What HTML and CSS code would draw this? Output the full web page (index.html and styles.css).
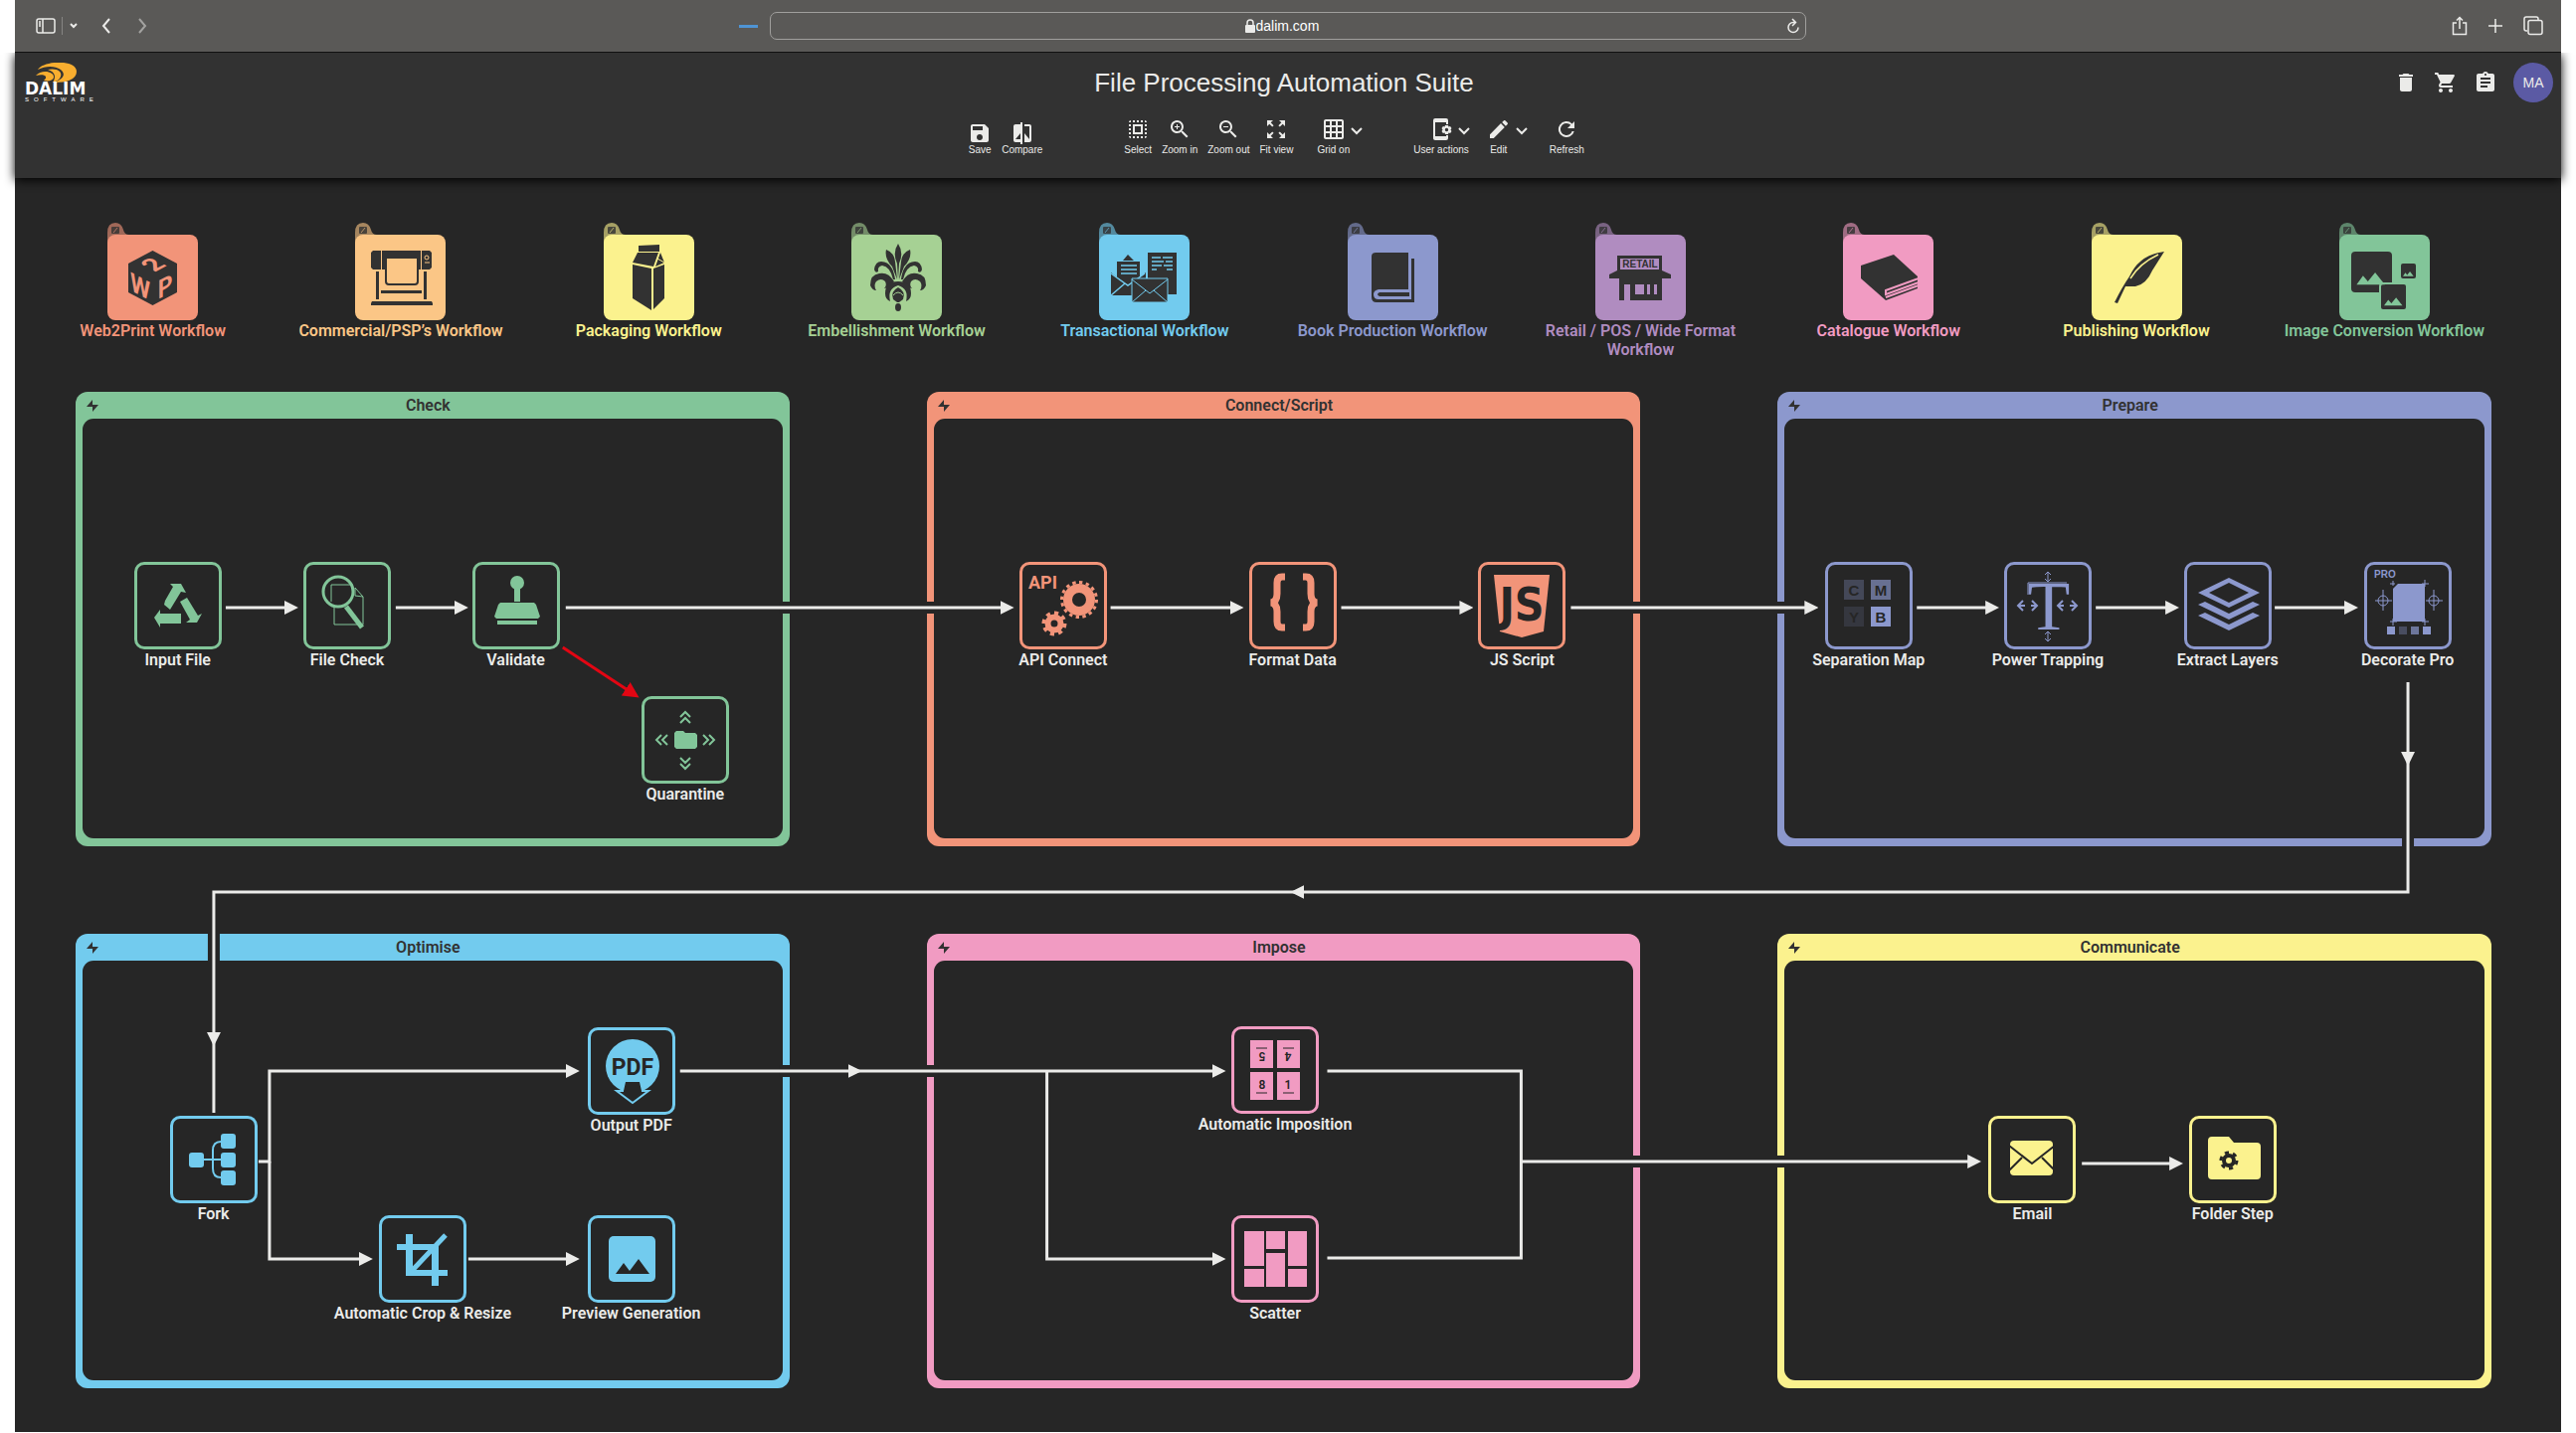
FILE: index.html
```html
<!DOCTYPE html>
<html lang="en">
<head>
  <meta charset="UTF-8" />
  <meta name="viewport" content="width=device-width, initial-scale=1.0"/>
  <title>File Processing Automation Suite</title>
  <link rel="stylesheet" href="styles.css">
</head>
<body>
  <div class="window">

    <!-- Browser bar -->
    <div class="browser">
      <div class="browser-left">
        <button class="bb" aria-label="Sidebar"><svg width="20" height="16" viewBox="0 0 20 16"><rect x="1" y="1" width="18" height="14" rx="2" class="line"/><path d="M7 1v14M3 4h2M3 6h2M3 8h2" class="line"/></svg></button>
        <span class="divider"></span>
        <button class="bb chev" aria-label="Tab groups"><svg width="8" height="6" viewBox="0 0 8 6"><path d="M1 1l3 3 3-3" class="line thick"/></svg></button>
        <button class="bb back" aria-label="Back"><svg width="10" height="16" viewBox="0 0 10 16"><path d="M8 1L2 8l6 7" class="line thick"/></svg></button>
        <button class="bb forward" aria-label="Forward"><svg width="10" height="16" viewBox="0 0 10 16"><path d="M2 1l6 7-6 7" class="line thick"/></svg></button>
        <span class="progress"></span>
      </div>
      <div class="address">
        <svg width="10" height="14" viewBox="0 0 10 14"><rect y="6" width="10" height="8" rx="1" fill="currentColor"/><path d="M2 6V4a3 3 0 0 1 6 0v2" class="line"/></svg>
        <input type="text" value="dalim.com" aria-label="Address">
        <button class="bb reload" aria-label="Reload"><svg width="14" height="16" viewBox="0 0 14 16"><path d="M9 4.500H7a5 5 0 1 0 5 5M6 1l3.500 3.500L6 8" class="line"/></svg></button>
      </div>
      <div class="browser-right">
        <button class="bb" aria-label="Share"><svg width="16" height="20" viewBox="0 0 16 20"><path d="M5 7H1.500v11.500h13V7H11M8 13V1.500M5 4.500l3-3 3 3" class="line"/></svg></button>
        <button class="bb" aria-label="New tab"><svg width="16" height="16" viewBox="0 0 16 16"><path d="M8 1v14M1 8h14" class="line"/></svg></button>
        <button class="bb" aria-label="Tabs"><svg width="20" height="20" viewBox="0 0 20 20"><path d="M4 15H3a2 2 0 0 1-2-2V3a2 2 0 0 1 2-2h10a2 2 0 0 1 2 2v1" class="line"/><rect x="5" y="4.500" width="14" height="14" rx="2" class="line"/></svg></button>
      </div>
    </div>

    <!-- Application header -->
    <header class="header">
      <a class="logo" href="#" aria-label="Dalim Software">
        <svg width="88" height="48" viewBox="0 0 88 48">
          <path class="swoosh" d="M13 7C18-2 52-4 52 9 52 17 42 20 29 20 38 17 42 12 36 7 30 3 21 3 13 7z"/>
          <path class="swoosh" d="M23 7C32 5 38 9 36 14 35 17 32 19 28 20 32 14 30 9 23 7z"/>
          <path class="swoosh" d="M11 13C17 6 30 9 29 15 28 18 24 19 19 18 24 14 20 11 11 13z"/>
          <text x="0" y="32" class="brand">DALIM</text>
          <text x="0" y="39" class="brand-sub">SOFTWARE</text>
        </svg>
      </a>
      <h1>File Processing Automation Suite</h1>
      <div class="account">
        <button class="icon-btn" aria-label="Delete"><svg width="24" height="24" viewBox="0 0 24 24"><path d="M6 19c0 1.100.9 2 2 2h8c1.100 0 2-.9 2-2V7H6v12zM19 4h-3.500l-1-1h-5l-1 1H5v2h14V4z"/></svg></button>
        <button class="icon-btn" aria-label="Cart"><svg width="24" height="24" viewBox="0 0 24 24"><path d="M7 18c-1.100 0-2 .9-2 2s.9 2 2 2 2-.9 2-2-.9-2-2-2zM1 2v2h2l3.600 7.600L5.200 14c-.1.300-.2.600-.2 1 0 1.100.9 2 2 2h12v-2H7.400c-.1 0-.2-.1-.2-.3L8.100 13h7.400c.8 0 1.400-.4 1.700-1l3.600-6.500C21.200 4.800 20.700 4 20 4H5.200l-.9-2H1zm16 16c-1.100 0-2 .9-2 2s.9 2 2 2 2-.9 2-2-.9-2-2-2z"/></svg></button>
        <button class="icon-btn" aria-label="Tasks"><svg width="24" height="24" viewBox="0 0 24 24"><path d="M19 3h-4.200C14.400 1.800 13.300 1 12 1s-2.400.8-2.800 2H5c-1.100 0-2 .9-2 2v14c0 1.100.9 2 2 2h14c1.100 0 2-.9 2-2V5c0-1.100-.9-2-2-2zm-7 0c.6 0 1 .4 1 1s-.4 1-1 1-1-.4-1-1 .4-1 1-1zm2 14H7v-2h7v2zm3-4H7v-2h10v2zm0-4H7V7h10v2z"/></svg></button>
        <button class="avatar">MA</button>
      </div>

      <div class="toolbar">
        <div class="tools low">
          <button class="tool"><svg width="24" height="24" viewBox="0 0 24 24"><path d="M17 3H5c-1.100 0-2 .9-2 2v14c0 1.100.9 2 2 2h14c1.100 0 2-.9 2-2V7l-4-4zm-5 16c-1.700 0-3-1.300-3-3s1.300-3 3-3 3 1.300 3 3-1.300 3-3 3zm3-10H5V5h10v4z"/></svg>Save</button>
          <button class="tool"><svg width="24" height="24" viewBox="0 0 24 24"><path d="M10 3H5c-1.100 0-2 .9-2 2v14c0 1.100.9 2 2 2h5v2h2V1h-2v2zm0 15H5l5-6v6zm9-15h-5v2h5v13l-5-6v9h5c1.100 0 2-.9 2-2V5c0-1.100-.9-2-2-2z"/></svg>Compare</button>
        </div>
        <div class="tools">
          <button class="tool"><svg width="24" height="24" viewBox="0 0 24 24"><path d="M3 5h2V3c-1.100 0-2 .9-2 2zm0 8h2v-2H3v2zm4 8h2v-2H7v2zM3 9h2V7H3v2zm10-6h-2v2h2V3zm6 0v2h2c0-1.100-.9-2-2-2zM5 21v-2H3c0 1.100.9 2 2 2zm-2-4h2v-2H3v2zM9 3H7v2h2V3zm2 18h2v-2h-2v2zm8-8h2v-2h-2v2zm0 8c1.100 0 2-.9 2-2h-2v2zm0-12h2V7h-2v2zm0 8h2v-2h-2v2zm-4 4h2v-2h-2v2zm0-16h2V3h-2v2zM7 17h10V7H7v10zm2-8h6v6H9V9z"/></svg>Select</button>
          <button class="tool"><svg width="24" height="24" viewBox="0 0 24 24"><path d="M15.500 14h-.8l-.3-.3A6.500 6.500 0 1 0 13.700 14.400l.3.3v.8l5 5 1.500-1.500-5-5zm-6 0a4.500 4.500 0 1 1 0-9 4.500 4.500 0 0 1 0 9zm2.500-4h-2v2H9v-2H7V9h2V7h1v2h2v1z"/></svg>Zoom in</button>
          <button class="tool"><svg width="24" height="24" viewBox="0 0 24 24"><path d="M15.500 14h-.8l-.3-.3A6.500 6.500 0 1 0 13.700 14.400l.3.3v.8l5 5 1.500-1.500-5-5zm-6 0a4.500 4.500 0 1 1 0-9 4.500 4.500 0 0 1 0 9zM7 9h5v1H7z"/></svg>Zoom out</button>
          <button class="tool"><svg width="24" height="24" viewBox="0 0 24 24"><path d="M15 3l2.300 2.300-2.900 2.900 1.400 1.400 2.900-2.900L21 9V3h-6zM3 9l2.300-2.300 2.900 2.900 1.400-1.400-2.900-2.900L9 3H3v6zm6 12l-2.300-2.300 2.900-2.900-1.400-1.400-2.900 2.900L3 15v6h6zm12-6l-2.300 2.300-2.900-2.900-1.400 1.400 2.900 2.900L15 21h6v-6z"/></svg>Fit view</button>
          <button class="tool grid-tool"><svg width="24" height="24" viewBox="0 0 24 24"><path d="M20 2H4c-1.100 0-2 .9-2 2v16c0 1.100.9 2 2 2h16c1.100 0 2-.9 2-2V4c0-1.100-.9-2-2-2zM8 20H4v-4h4v4zm0-6H4v-4h4v4zm0-6H4V4h4v4zm6 12h-4v-4h4v4zm0-6h-4v-4h4v4zm0-6h-4V4h4v4zm6 12h-4v-4h4v4zm0-6h-4v-4h4v4zm0-6h-4V4h4v4z"/></svg>Grid on<svg class="arrow" width="14" height="10" viewBox="0 0 14 10"><path d="M2 2l5 5 5-5" class="line thick"/></svg></button>
        </div>
        <div class="tools wide">
          <button class="tool"><svg width="24" height="24" viewBox="0 0 24 24"><path d="M17 1H6a2 2 0 0 0-2 2v18c0 1.100.9 2 2 2h11a2 2 0 0 0 2-2v-3h-2v1H6V5h11v2h2V3a2 2 0 0 0-2-2z"/><path fill-rule="evenodd" d="M16 8h3l.5 1.500 1.600-.4L22.500 11l-1 1.500 1 1.500-1.400 1.900-1.600-.4L19 17h-3l-.5-1.500-1.600.4L12.500 14l1-1.500-1-1.500 1.400-1.900 1.600.4zM17.500 10.800a1.700 1.700 0 1 0 0 3.400 1.700 1.700 0 0 0 0-3.400z"/></svg>User actions<svg class="arrow" width="14" height="10" viewBox="0 0 14 10"><path d="M2 2l5 5 5-5" class="line thick"/></svg></button>
          <button class="tool"><svg width="24" height="24" viewBox="0 0 24 24"><path d="M3 17.200V21h3.800L17.800 9.900l-3.800-3.800L3 17.200zM20.700 7c.4-.4.4-1 0-1.400l-2.300-2.300c-.4-.4-1-.4-1.400 0l-1.800 1.800 3.700 3.700L20.700 7z"/></svg>Edit<svg class="arrow" width="14" height="10" viewBox="0 0 14 10"><path d="M2 2l5 5 5-5" class="line thick"/></svg></button>
          <button class="tool refresh"><svg width="24" height="24" viewBox="0 0 24 24"><path d="M17.600 6.400A8 8 0 1 0 19.700 14h-2.100A6 6 0 1 1 12 6c1.700 0 3.100.7 4.200 1.800L13 11h7V4l-2.400 2.400z"/></svg>Refresh</button>
        </div>
      </div>
    </header>

    <!-- Shared shapes -->
    <svg class="defs" width="0" height="0" aria-hidden="true">
      <symbol id="tile" viewBox="0 -12 91 98">
        <path opacity=".6" d="M0 14V-2Q0-12 8-12 14-12 16-5 17 0 22 0L12 10z"/>
        <rect x="4" y="-8" width="8" height="7" rx="1" class="ink" opacity=".8"/><path d="M6-2l4-5" stroke="currentColor" opacity=".6"/>
        <rect width="91" height="86" rx="8"/>
      </symbol>
      <symbol id="bolt" viewBox="0 0 12 12"><path d="M6 0v5h6L6 12V7H0z"/></symbol>
      <symbol id="mountains" viewBox="0 0 36 16"><path d="M0 15L8 4l6 7L23 0l12 15z"/></symbol>
    </svg>

    <!-- Workflow shortcuts -->
    <nav class="workflows">
      <a class="workflow orange" href="#">
        <svg viewBox="0 -12 91 98"><use href="#tile" y="-12" width="91" height="98"/>
          <path class="ink" d="M45.500 16L70 29v29L45.500 71 21 58V29z"/>
          <g class="cube"><text y="9" transform="matrix(.88 .47 0 1 33 52)">W</text><text y="9" transform="matrix(.88 -.47 0 1 58 52)">P</text><text y="9" transform="matrix(.88 -.47 .88 .47 46 30)">2</text></g>
        </svg>
        <span>Web2Print Workflow</span>
      </a>
      <a class="workflow amber" href="#">
        <svg viewBox="0 -12 91 98"><use href="#tile" y="-12" width="91" height="98"/>
          <g class="ink"><path d="M18 16h8v19h-8l-2-2V18zM27 16h39v19h-3V24H30v11h-3zM67 16h8l2 2v15l-2 2h-8zM21 37h3v28h-3zM69 37h3v28h-3zM26 56h41v3H26zM17 67h60l1 2v2H16v-2z"/></g>
          <path class="ink-line" d="M31 24v23q0 3 3 3h26q3 0 3-3V24"/><circle cx="72" cy="23" r="2" fill="none" stroke="currentColor"/><path d="M70 28h5" stroke="currentColor"/>
        </svg>
        <span>Commercial/PSP’s Workflow</span>
      </a>
      <a class="workflow yellow" href="#">
        <svg viewBox="0 -12 91 98"><use href="#tile" y="-12" width="91" height="98"/>
          <path class="ink" d="M35 11l21-1v7H35zM34 18h21l-5 14-21-4zM57 18l4 10-9 4zM29 30l19 4v42L29 64zM50 34l11-4v34L50 75z"/><path d="M54 24l7 4" stroke="currentColor"/>
        </svg>
        <span>Packaging Workflow</span>
      </a>
      <a class="workflow lime" href="#">
        <svg viewBox="0 -12 91 98"><use href="#tile" y="-12" width="91" height="98"/>
          <g class="ink">
            <path d="M47 9q6 9 1 20l-1 16-1-16q-5-11 1-20zM35 15q8 3 9 12l2 18-5-13q-8-8-6-17zM59 15q-8 3-9 12l-2 18 5-13q8-8 6-17z"/>
            <path d="M44 45C43 36 39 27 30 27q-6 0-7 8 1 4 4 2-1-5 4-6 8 1 11 14zM50 45C51 36 55 27 64 27q6 0 7 8-1 4-4 2 1-5-4-6-8 1-11 14z"/>
            <path d="M43 47Q37 37 28 39 19 40 19 51q2 5 6 5-3-5 0-9 5-4 9 0 2 4-1 7 4 0 10-7zM51 47Q57 37 66 39 75 40 75 51q-2 5-6 5 3-5 0-9-5-4-9 0-2 4 1 7-4 0-10-7z"/>
            <path d="M47 47q-13 0-13 12 0 6 5 8-3-13 8-16 11 3 8 16 5-2 5-8 0-12-13-12z"/><path d="M47 53q-8 4-5 12l4 3h2l4-3q3-8-5-12z"/><ellipse cx="47" cy="73" rx="3" ry="4"/>
          </g>
          <path d="M42 61q5-6 10 0" fill="none" stroke="currentColor"/>
        </svg>
        <span>Embellishment Workflow</span>
      </a>
      <a class="workflow cyan" href="#">
        <svg viewBox="0 -12 91 98"><use href="#tile" y="-12" width="91" height="98"/>
          <path class="ink" d="M49 18h29v42H49zM29 20l6 6H24zM18 27h23v16l6-5v23H12V38l6 5z"/>
          <path stroke="currentColor" stroke-width="1.500" fill="none" d="M53 23h9M64 23h10M53 27h12M67 27h7M53 31h10M65 31h9M53 35h5M68 35h6M22 31h16M22 35h16M22 39h16M12 39l17 12 17-12M12 61l14-12"/>
          <path class="ink" stroke="currentColor" d="M33 44h36v24H33z"/><path stroke="currentColor" fill="none" d="M33 45l18 14 18-14M33 68l14-12M69 68L55 56"/>
        </svg>
        <span>Transactional Workflow</span>
      </a>
      <a class="workflow indigo" href="#">
        <svg viewBox="0 -12 91 98"><use href="#tile" y="-12" width="91" height="98"/>
          <path class="ink" d="M28 18h33v37H31q-5 1-5 5 0 5 5 5h33V24h3v44H29q-5 0-5-5V22q0-4 4-4z"/><path class="ink" d="M32 58h30v4H32q-4-2 0-4z"/>
        </svg>
        <span>Book Production Workflow</span>
      </a>
      <a class="workflow purple" href="#">
        <svg viewBox="0 -12 91 98"><use href="#tile" y="-12" width="91" height="98"/>
          <path class="ink" fill-rule="evenodd" d="M22 21h45v15l9 4v4h-9v22H35V50h-6v16h-5V44H14v-4l8-4zM25 24v11h39V24zM40 50v10h9V50zM52 50v10h3V50zM59 50v10h3V50z"/><text x="45" y="33" class="retail">RETAIL</text>
        </svg>
        <span>Retail / POS / Wide Format Workflow</span>
      </a>
      <a class="workflow pink" href="#">
        <svg viewBox="0 -12 91 98"><use href="#tile" y="-12" width="91" height="98"/>
          <path class="ink" d="M18 31l33-11 24 22v12L43 66 18 44z"/><path stroke="currentColor" stroke-width="2" fill="none" d="M76 44L43 56v4l33-12M76 51L43 63"/>
        </svg>
        <span>Catalogue Workflow</span>
      </a>
      <a class="workflow yellow" href="#">
        <svg viewBox="0 -12 91 98"><use href="#tile" y="-12" width="91" height="98"/>
          <path class="ink" d="M73 17Q48 20 38 42 31 52 23 68l3 1 8-17h10Q55 50 61 36z"/><path stroke="currentColor" stroke-width="1.500" fill="none" d="M67 20Q48 29 39 44"/>
        </svg>
        <span>Publishing Workflow</span>
      </a>
      <a class="workflow green" href="#">
        <svg viewBox="0 -12 91 98"><use href="#tile" y="-12" width="91" height="98"/>
          <g class="ink"><rect x="12" y="17" width="41" height="41" rx="4"/><rect x="62" y="29" width="15" height="15" rx="2"/><rect x="41" y="49" width="27" height="27" rx="3" stroke="currentColor" stroke-width="2"/></g>
          <use href="#mountains" x="17" y="38" width="30" height="13"/><use href="#mountains" x="64" y="37" width="11" height="5"/><use href="#mountains" x="45" y="63" width="19" height="9"/>
        </svg>
        <span>Image Conversion Workflow</span>
      </a>
    </nav>

    <!-- Process diagram -->
    <main class="diagram">
      <section class="group green">
        <h2><svg class="bolt"><use href="#bolt"/></svg>Check</h2>
        <div class="panel">
          <div class="node input-file">
            <svg class="box" viewBox="3 3 82 82"><path d="M36 22h11l5 9-5-1-11 18-6-5 1-4 8-14zM46 40l7-4 11 18 4-2-5 9H52l4-3zM20 56l6-8v4h21v10H26v4z"/></svg>
            <span>Input File</span>
          </div>
          <div class="node file-check">
            <svg class="box" viewBox="3 3 82 82"><path class="stroke thin" d="M31 44v19h29V35l-8-9v8l8 1M28 40V23h22"/><circle class="stroke" cx="35" cy="30" r="15"/><path class="stroke fat" d="M43 45l16 21"/></svg>
            <span>File Check</span>
          </div>
          <div class="node validate">
            <svg class="box" viewBox="3 3 82 82"><circle cx="45" cy="21" r="7"/><path d="M42 27h6v13h-6zM28 41h34l2 2 4 12-2 2H24l-2-2 4-12zM25 59h40v4H25z"/></svg>
            <span>Validate</span>
          </div>
          <div class="node quarantine">
            <svg class="box" viewBox="3 3 82 82"><path d="M33 37l2-2h7l2 2h10l2 2v12l-2 2H35l-2-2z"/><path class="stroke two" d="M39 21l5-5 5 5M39 27l5-5 5 5M39 62l5 5 5-5M39 68l5 5 5-5M20 39l-5 5 5 5M26 39l-5 5 5 5M62 39l5 5-5 5M68 39l5 5-5 5"/></svg>
            <span>Quarantine</span>
          </div>
        </div>
      </section>

      <section class="group orange">
        <h2><svg class="bolt"><use href="#bolt"/></svg>Connect/Script</h2>
        <div class="panel">
          <div class="node api-connect">
            <svg class="box" viewBox="3 3 82 82"><text x="9" y="27" class="api">API</text><circle cx="60" cy="38" r="11.500" fill="none" stroke="currentColor" stroke-width="9"/><circle cx="60" cy="38" r="17.500" fill="none" stroke="currentColor" stroke-width="3" pathLength="32" stroke-dasharray="1"/><circle cx="35" cy="62" r="6.500" fill="none" stroke="currentColor" stroke-width="6"/><circle cx="35" cy="62" r="10.500" fill="none" stroke="currentColor" stroke-width="4" pathLength="16" stroke-dasharray="1"/></svg>
            <span>API Connect</span>
          </div>
          <div class="node format-data">
            <svg class="box" viewBox="3 3 82 82"><path class="stroke brace" d="M36 15h-3q-5 0-5 6v11q0 8-6 9 6 1 6 9v10q0 6 5 6h3M54 15h3q5 0 5 6v11q0 8 6 9-6 1-6 9v10q0 6-5 6h-3"/></svg>
            <span>Format Data</span>
          </div>
          <div class="node js-script">
            <svg class="box" viewBox="3 3 82 82"><path d="M16 13h56l-6 57-22 6-22-6z"/><text x="44" y="59" class="js">JS</text></svg>
            <span>JS Script</span>
          </div>
        </div>
      </section>

      <section class="group indigo">
        <h2><svg class="bolt"><use href="#bolt"/></svg>Prepare</h2>
        <div class="panel">
          <div class="node separation">
            <svg class="box" viewBox="3 3 82 82"><g><rect x="19" y="18" width="20" height="20" opacity=".3"/><rect x="46" y="18" width="20" height="20" opacity=".65"/><rect x="19" y="45" width="20" height="20" opacity=".15"/><rect x="46" y="45" width="20" height="20"/></g><g class="cmyb"><text x="29" y="34">C</text><text x="56" y="34">M</text><text x="29" y="61">Y</text><text x="56" y="61">B</text></g></svg>
            <span>Separation Map</span>
          </div>
          <div class="node trapping">
            <svg class="box" viewBox="3 3 82 82"><text x="45" y="68" class="trap">T</text><path class="stroke thin" d="M24 33V21h39"/><path class="stroke two" d="M14 44h7M27 44h6M19 39l-5 5 5 5M28 39l5 5-5 5M54 44h6M66 44h7M59 39l-5 5 5 5M68 39l5 5-5 5"/><path class="stroke thin" d="M44 10v10M41 13l3-3 3 3M41 17l3 3 3-3M44 70v10M41 73l3-3 3 3M41 77l3 3 3-3"/></svg>
            <span>Power Trapping</span>
          </div>
          <div class="node extract">
            <svg class="box" viewBox="3 3 82 82"><path fill-rule="evenodd" d="M45 16l31 15-31 15-31-15zM45 21L25 31l20 10 20-10zM14 43l7-3 24 12 24-12 7 3-31 15zM14 54l7-3 24 12 24-12 7 3-31 15z"/></svg>
            <span>Extract Layers</span>
          </div>
          <div class="node decorate">
            <svg class="box" viewBox="3 3 82 82"><text x="10" y="16" class="pro">PRO</text><path d="M34 22h27v38H29V27z"/><path class="stroke thin" d="M26 22h5M29 19v5M58 22h7M61 18v7M26 60h7M29 57v7M58 60h7M61 57v7M11 39h17M19 28v21M62 39h17M70 28v21"/><circle class="stroke thin" cx="19" cy="39" r="5"/><circle class="stroke thin" cx="70" cy="39" r="5"/><path d="M23 65h8v8h-8zM59 65h8v8h-8z"/><path opacity=".35" d="M35 65h8v8h-8z"/><path opacity=".7" d="M47 65h8v8h-8z"/></svg>
            <span>Decorate Pro</span>
          </div>
        </div>
      </section>

      <section class="group cyan">
        <h2><svg class="bolt"><use href="#bolt"/></svg>Optimise</h2>
        <div class="panel">
          <div class="node fork">
            <svg class="box" viewBox="3 3 82 82"><rect x="19" y="37" width="15" height="15" rx="3"/><rect x="51" y="18" width="15" height="15" rx="3"/><rect x="51" y="37" width="15" height="15" rx="3"/><rect x="51" y="55" width="15" height="15" rx="3"/><path class="stroke two" d="M34 44h17M51 26q-8 0-8 9v18q0 9 8 9"/></svg>
            <span>Fork</span>
          </div>
          <div class="node output-pdf">
            <svg class="box" viewBox="3 3 82 82"><circle cx="45" cy="39" r="27"/><text x="45" y="48" class="pdf">PDF</text><path class="down" d="M38 55h14l2 9h7L45 76 29 64h7z"/><path class="down-line" d="M36 64h-7l16 12 16-12h-7"/></svg>
            <span>Output PDF</span>
          </div>
          <div class="node crop">
            <svg class="box" viewBox="3 3 82 82"><path fill-rule="evenodd" d="M27 19h7v10h26v26h9v6h-9v10h-7V61H27V35H18v-6h9zM34 35v20h19V35z"/><path class="stroke fat" d="M33 56l34-36"/></svg>
            <span>Automatic Crop &amp; Resize</span>
          </div>
          <div class="node preview">
            <svg class="box" viewBox="3 3 82 82"><rect x="21" y="21" width="47" height="46" rx="5"/><path class="dark" d="M28 59l8-11 6 8 9-12 11 15z"/></svg>
            <span>Preview Generation</span>
          </div>
        </div>
      </section>

      <section class="group pink">
        <h2><svg class="bolt"><use href="#bolt"/></svg>Impose</h2>
        <div class="panel">
          <div class="node imposition">
            <svg class="box" viewBox="3 3 82 82"><path d="M19 14h23v28H19zM46 14h23v28H46zM19 46h23v28H19zM46 46h23v28H46z"/><path class="dark-line" d="M25 22h11M52 22h11M25 67h11M52 67h11"/><g class="digits"><text x="31" y="63">8</text><text x="57" y="63">1</text><text x="31" y="34" transform="rotate(180 31 30)">5</text><text x="57" y="34" transform="rotate(180 57 30)">4</text></g></svg>
            <span>Automatic Imposition</span>
          </div>
          <div class="node scatter">
            <svg class="box" viewBox="3 3 82 82"><path d="M13 16h20v35H13zM13 54h20v18H13zM35 16h19v18H35zM35 38h19v34H35zM57 16h19v35H57zM57 54h19v18H57z"/></svg>
            <span>Scatter</span>
          </div>
        </div>
      </section>

      <section class="group yellow">
        <h2><svg class="bolt"><use href="#bolt"/></svg>Communicate</h2>
        <div class="panel">
          <div class="node email">
            <svg class="box" viewBox="3 3 82 82"><rect x="22" y="25" width="43" height="35" rx="4"/><path class="dark-line two" d="M21 30l23 18 23-18M21 55l13-13M67 55L54 42"/></svg>
            <span>Email</span>
          </div>
          <div class="node folder-step">
            <svg class="box" viewBox="3 3 82 82"><path d="M23 21h17l5 6h23q4 0 4 4v29q0 4-4 4H23q-4 0-4-4V25q0-4 4-4z"/><circle cx="40" cy="45" r="5" class="dark-line" stroke-width="4"/><circle cx="40" cy="45" r="8" class="dark-line" stroke-width="3" pathLength="12" stroke-dasharray="1"/></svg>
            <span>Folder Step</span>
          </div>
        </div>
      </section>

      <svg class="links" viewBox="0 0 2430 1002" preserveAspectRatio="none">
        <defs>
          <marker id="head" viewBox="0 0 14 14" refX="2" refY="7" markerWidth="14" markerHeight="14" markerUnits="userSpaceOnUse" orient="auto"><path d="M0 0l14 7-14 7z" fill="#ebebe9"/></marker>
          <marker id="head-red" viewBox="0 0 14 14" refX="10" refY="7" markerWidth="16" markerHeight="16" markerUnits="userSpaceOnUse" orient="auto"><path d="M0 0l14 7-14 7z" fill="#e30613"/></marker>
        </defs>
        <!-- openings where a link crosses a group border -->
        <path class="opening" d="M708 217h160M1564 217h160M708 683h160M1564 774h160M2346 446v14M139 543v31"/>
        <g class="link">
          <path class="to" d="M151 217h61"/>
          <path class="to" d="M322 217h61"/>
          <path class="to" d="M493 217h439"/>
          <path class="to" d="M1041 217h122"/>
          <path class="to" d="M1273 217h121"/>
          <path class="to" d="M1504 217h237"/>
          <path class="to" d="M1852 217h71"/>
          <path class="to" d="M2032 217h72"/>
          <path class="to" d="M2212 217h72"/>
          <path class="to" d="M2346 292v72"/>
          <path class="to" d="M2346 364v139H1234"/>
          <path class="to" d="M1234 503H139v143"/>
          <path d="M139 646v79"/>
          <path class="to" d="M184 774h11V683h300"/>
          <path class="to" d="M195 774v98h92"/>
          <path class="to" d="M395 872h100"/>
          <path class="to" d="M608 683h171"/>
          <path class="to" d="M779 683h366"/>
          <path class="to" d="M977 683v189h168"/>
          <path d="M1259 683h195v188h-195"/>
          <path class="to" d="M1454 774h451"/>
          <path class="to" d="M2018 776h90"/>
        </g>
        <path class="link-error" d="M490 257l73 48"/>
      </svg>
    </main>
  </div>
</body>
</html>
```
FILE: styles.css
```css
* {
  box-sizing: border-box;
}

body {
  margin: 0;
  background: #fff;
  color: #ebebe9;
  font-family: Roboto, "Liberation Sans", sans-serif;
  overflow-x: hidden;
}

button {
  background: none;
  border: none;
  padding: 0;
  color: inherit;
  font-family: inherit;
  cursor: pointer;
}

svg {
  display: block;
  fill: currentColor;
}

.window {
  margin: 0 15px;
  min-height: calc(100vh - 1px);
  background: #262626;
}

.line {
  fill: none;
  stroke: currentColor;
  stroke-width: 1.5;
}

.line.thick {
  stroke-width: 2;
}

.defs {
  position: absolute;
}

/* Browser bar */
.browser {
  display: grid;
  grid-template-columns: 1fr 41% 1fr;
  align-items: center;
  height: 53px;
  background: #5a5957;
  border-bottom: 1px solid #111;
  font-family: "Liberation Sans", sans-serif;
}

.browser-left {
  display: flex;
  align-items: center;
  padding: 0 8px 0 21px;
}

.divider {
  width: 1px;
  height: 18px;
  margin: 0 7px 0 6px;
  background: #858482;
}

.back {
  margin-left: 24px;
}

.forward {
  margin-left: 26px;
  opacity: 0.5;
}

.progress {
  width: 19px;
  height: 3px;
  margin-left: auto;
  background: #4f94d4;
}

.address {
  display: flex;
  align-items: center;
  justify-content: center;
  gap: 1px;
  height: 28px;
  margin: 0 4px;
  padding-right: 10px;
  border: 1px solid #a09f9d;
  border-radius: 7px;
  position: relative;
}

.address input {
  width: 66px;
  padding: 0;
  border: none;
  background: none;
  color: #fff;
  font-family: inherit;
  font-size: 14px;
}

.reload {
  position: absolute;
  right: 5px;
}

.browser-right {
  display: flex;
  align-items: center;
  justify-content: flex-end;
  gap: 20px;
  padding-right: 18px;
}

/* Header */
.header {
  display: grid;
  grid-template-columns: 1fr auto 1fr;
  grid-template-rows: 40px auto;
  height: 126px;
  padding: 10px 8px 0 0;
  background: #323232;
  box-shadow: 0 2px 10px #000;
  font-family: "Liberation Sans", sans-serif;
  clip-path: inset(0 -15px -15px -15px);
}

.logo {
  padding-left: 10px;
  color: #fff;
}

.swoosh {
  fill: #f9ae2f;
}

.brand {
  font: bold 17px "DejaVu Sans", sans-serif;
}

.brand-sub {
  font: 6px "Liberation Sans", sans-serif;
  letter-spacing: 5px;
}

h1 {
  margin: 0;
  font-size: 26px;
  font-weight: 400;
  line-height: 40px;
}

.account {
  display: flex;
  align-items: center;
  justify-content: flex-end;
  gap: 16px;
}

.avatar {
  width: 40px;
  height: 40px;
  border-radius: 50%;
  background: #5b5aa4;
  font-family: "Liberation Sans", sans-serif;
  font-size: 14px;
}

.toolbar {
  grid-column: 1 / -1;
  display: flex;
  align-items: flex-start;
  justify-content: center;
  gap: 82px;
  padding: 15px 16px 0 0;
}

.tools {
  display: flex;
  gap: 10px;
  align-items: flex-start;
}

.tool {
  display: flex;
  flex-direction: column;
  align-items: center;
  gap: 3px;
  position: relative;
  font-size: 10px;
  line-height: 12px;
}

.low .tool {
  padding-top: 4px;
  gap: 0;
}

.low .tool svg {
  margin-bottom: -1px;
}

.grid-tool {
  margin: 0 -18px 0 14px;
}

.wide {
  gap: 18px;
}

.refresh {
  margin-left: 21px;
}

.arrow {
  position: absolute;
  top: 9px;
  left: calc(50% + 16px);
}

/* Workflow shortcuts */
.workflows {
  display: grid;
  grid-template-columns: repeat(10, 1fr);
  padding: 45px 53px 0 14px;
}

.workflow {
  display: flex;
  flex-direction: column;
  align-items: center;
  gap: 1px;
  padding: 0 20px;
  color: var(--c);
  font-size: 16px;
  font-weight: 600;
  line-height: 19px;
  text-align: center;
  text-decoration: none;
}

.workflow svg {
  width: 91px;
  height: 98px;
}

.ink {
  fill: #323232;
}

.ink-line {
  fill: none;
  stroke: #323232;
  stroke-width: 2;
}

.cube {
  font-size: 26px;
  font-weight: 700;
  text-anchor: middle;
}

.retail {
  fill: #323232;
  font: bold 10px "Liberation Sans", sans-serif;
  text-anchor: middle;
}

.green { --c: #82c599; }
.orange { --c: #f29479; }
.indigo { --c: #8c98cd; }
.cyan { --c: #72cbee; }
.pink { --c: #f19bc2; }
.yellow { --c: #fbf28e; }
.amber { --c: #fbc686; }
.lime { --c: #a6d194; }
.purple { --c: #b08cc0; }

/* Diagram */
.diagram {
  display: grid;
  grid-template-columns: repeat(3, 1fr);
  gap: 88px 138px;
  margin: 33px 70px 0 61px;
  padding-bottom: 44px;
  position: relative;
}

.group {
  padding: 0 7px 8px;
  border-radius: 12px;
  background: var(--c);
}

.group h2 {
  display: flex;
  align-items: center;
  justify-content: center;
  height: 27px;
  margin: 0;
  padding-right: 9px;
  position: relative;
  color: #323232;
  font-size: 16px;
  font-weight: 600;
}

.bolt {
  position: absolute;
  left: 4px;
  width: 12px;
  height: 12px;
}

.panel {
  position: relative;
  height: 422px;
  border-radius: 11px;
  background: #262626;
}

.node {
  position: absolute;
  width: 200px;
  margin-left: -100px;
  text-align: center;
  font-size: 16px;
  font-weight: 600;
  line-height: 20px;
}

.box {
  width: 88px;
  height: 88px;
  margin: 0 auto 1px;
  border: 3px solid var(--c);
  border-radius: 10px;
  color: var(--c);
}

.input-file { left: 13.6%; top: 144px; }
.file-check { left: 37.8%; top: 144px; }
.validate { left: 61.9%; top: 144px; }
.quarantine { left: 86.1%; top: 279px; }
.api-connect { left: 18.5%; top: 144px; }
.format-data { left: 51.3%; top: 144px; }
.js-script { left: 84.1%; top: 144px; }
.separation { left: 12%; top: 144px; }
.trapping { left: 37.6%; top: 144px; }
.extract { left: 63.3%; top: 144px; }
.decorate { left: 89%; top: 144px; }
.fork { left: 18.7%; top: 156px; }
.output-pdf { left: 78.4%; top: 67px; }
.crop { left: 48.6%; top: 256px; }
.preview { left: 78.4%; top: 256px; }
.imposition { left: 48.8%; top: 66px; }
.scatter { left: 48.8%; top: 256px; }
.email { left: 35.4%; top: 156px; }
.folder-step { left: 64%; top: 156px; }

.stroke {
  fill: none;
  stroke: currentColor;
  stroke-width: 3;
}

.stroke.thin { stroke-width: 1; }
.stroke.two { stroke-width: 2; }
.stroke.fat { stroke-width: 5; }
.stroke.brace { stroke-width: 7; }

.dark {
  fill: #262626;
}

.dark-line {
  fill: none;
  stroke: #262626;
}

.dark-line.two {
  stroke-width: 2;
}

.api {
  font-size: 18px;
  font-weight: 700;
}

.js {
  fill: #262626;
  font: bold 46px "DejaVu Sans Condensed", "DejaVu Sans", sans-serif;
  text-anchor: middle;
}

.cmyb {
  fill: #262626;
  font: bold 15px "Liberation Sans", sans-serif;
  text-anchor: middle;
}

.trap {
  font: 70px "Liberation Serif", serif;
  text-anchor: middle;
}

.pro {
  font: bold 10px "Liberation Sans", sans-serif;
}

.pdf {
  fill: #262626;
  font-size: 23px;
  font-weight: 700;
  text-anchor: middle;
}

.down {
  fill: #262626;
}

.down-line {
  fill: none;
  stroke: currentColor;
  stroke-width: 2;
}

.digits {
  fill: #262626;
  font-size: 12px;
  text-anchor: middle;
}

/* Links between the nodes, drawn over the groups */
.links {
  position: absolute;
  inset: 0 0 44px;
  width: 100%;
  height: calc(100% - 44px);
  pointer-events: none;
}

.link path {
  fill: none;
  stroke: #ebebe9;
  stroke-width: 3;
}

.link .to {
  marker-end: url(#head);
}

.opening {
  fill: none;
  stroke: #262626;
  stroke-width: 12;
}

.link-error {
  stroke: #e30613;
  stroke-width: 3;
  marker-end: url(#head-red);
}
```
